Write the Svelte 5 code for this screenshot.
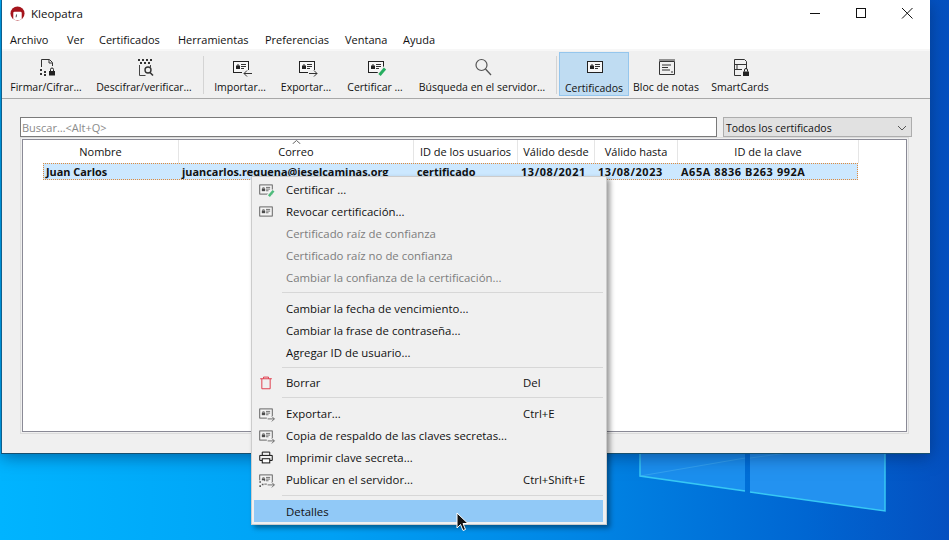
<script lang="ts">
  const menus = ["Archivo", "Ver", "Certificados", "Herramientas", "Preferencias", "Ventana", "Ayuda"];

  const tools = [
    { icon: "sign", label: "Firmar/Cifrar…" },
    { icon: "decrypt", label: "Descifrar/verificar…" },
    { sep: true },
    { icon: "import", label: "Importar…" },
    { icon: "export", label: "Exportar…" },
    { icon: "certify", label: "Certificar …" },
    { icon: "search", label: "Búsqueda en el servidor…" },
    { sep: true },
    { icon: "card", label: "Certificados", active: true },
    { icon: "notes", label: "Bloc de notas" },
    { icon: "smart", label: "SmartCards" },
  ];

  const columns = ["Nombre", "Correo", "ID de los usuarios", "Válido desde", "Válido hasta", "ID de la clave"];

  const row = ["Juan Carlos", "juancarlos.requena@ieselcaminas.org", "certificado", "13/08/2021", "13/08/2023", "A65A 8836 B263 992A"];

  const items = [
    { icon: "certify", label: "Certificar ..." },
    { icon: "card", label: "Revocar certificación..." },
    { label: "Certificado raíz de confianza", off: true },
    { label: "Certificado raíz no de confianza", off: true },
    { label: "Cambiar la confianza de la certificación...", off: true },
    { sep: 9 },
    { label: "Cambiar la fecha de vencimiento..." },
    { label: "Cambiar la frase de contraseña..." },
    { label: "Agregar ID de usuario..." },
    { sep: 8 },
    { icon: "trash", label: "Borrar", key: "Del" },
    { sep: 9 },
    { icon: "export", label: "Exportar...", key: "Ctrl+E" },
    { icon: "export", label: "Copia de respaldo de las claves secretas..." },
    { icon: "print", label: "Imprimir clave secreta..." },
    { icon: "publish", label: "Publicar en el servidor...", key: "Ctrl+Shift+E" },
    { sep: 10 },
    { label: "Detalles", hot: true },
  ];
</script>

{#snippet cardBase()}
  <rect x="4.5" y="4.5" width="15" height="11" fill="#f6f6f6" stroke="#222" />
  <rect x="7" y="9" width="4" height="3" fill="#222" />
  <path d="M8 9V8h2v1" fill="none" stroke="#222" />
  <path d="M12 7.500h5M12 9.500h5M12 11.500h3" stroke="#333" fill="none" />
{/snippet}

{#snippet glyph(name)}
  <svg class="glyph" viewBox="0 0 24 20" aria-hidden="true">
    {#if name === "card"}
      {@render cardBase()}
    {:else if name === "import"}
      {@render cardBase()}
      <rect x="13" y="13" width="10" height="7" fill="#f0f0f0" />
      <path d="M23 16.500h-8M18 13.500l-3 3 3 3" fill="none" stroke="#333" />
    {:else if name === "export"}
      {@render cardBase()}
      <rect x="13" y="13" width="10" height="7" fill="#f0f0f0" />
      <path d="M14 16.500h8M19 13.500l3 3-3 3" fill="none" stroke="#333" />
    {:else if name === "certify"}
      {@render cardBase()}
      <path d="M15 18l6-7" stroke="#f0f0f0" stroke-width="5" fill="none" />
      <path d="M15.500 18l5.500-6.500" stroke="#27ae60" stroke-width="3" fill="none" />
    {:else if name === "publish"}
      {@render cardBase()}
      <rect x="3" y="11" width="7" height="9" fill="#f0f0f0" />
      <path d="M4 12h2v2H4zM7 15h2v2H7zM4 17h2v2H4z" fill="#333" />
      <rect x="13" y="13" width="10" height="7" fill="#f0f0f0" />
      <path d="M14 16.500h8M19 13.500l3 3-3 3" fill="none" stroke="#333" />
    {:else if name === "sign"}
      <path d="M6.500 10V2.500h8l3 3V9" fill="none" stroke="#333" />
      <path d="M14 3v3h3" fill="none" stroke="#333" />
      <path d="M5 12h2v2H5zM9 14h2v2H9zM5 16h2v2H5zM9 17h2v2H9z" fill="#333" />
      <rect x="14" y="14" width="6" height="4.500" fill="#222" />
      <path d="M15.500 14v-1.500a1.500 1.500 0 0 1 3 0V14" fill="none" stroke="#222" />
    {:else if name === "decrypt"}
      <path d="M5 2h2v2H5zM9 2h2v2H9zM13 2h2v2h-2zM17 2h2v2h-2zM7 5h2v2H7zM11 5h2v2h-2zM15 5h2v2h-2z" fill="#333" />
      <path d="M6.500 8v10.500h6M17.500 8v2" fill="none" stroke="#444" />
      <circle cx="15" cy="13" r="3" fill="none" stroke="#333" stroke-width="1.400" />
      <path d="M17 15.500l3 3" stroke="#333" stroke-width="1.600" />
    {:else if name === "search"}
      <circle cx="10.500" cy="8" r="5.500" fill="none" stroke="#555" stroke-width="1.200" />
      <path d="M14.500 12l5.500 6" stroke="#555" stroke-width="1.300" />
    {:else if name === "notes"}
      <path d="M4.500 4.500h15v13h-15z" fill="none" stroke="#333" />
      <path d="M5 2v2M7 2v2M9 2v2M11 2v2M13 2v2M15 2v2M17 2v2M19 2v2" stroke="#333" />
      <path d="M7 8h9M7 10.500h6M7 13h8M16 15h2" stroke="#333" fill="none" />
    {:else if name === "smart"}
      <path d="M5.500 18.500V2.500h10l2 2V12M5.500 18.500H12" fill="none" stroke="#333" />
      <path d="M6 7.500h11M6 12.500h7M8 7.500v5" fill="none" stroke="#333" />
      <rect x="14" y="14.500" width="6" height="4.500" fill="#222" />
      <path d="M15.500 14.500V13a1.500 1.500 0 0 1 3 0v1.500" fill="none" stroke="#222" />
    {:else if name === "trash"}
      <path d="M5 5.500h14M9 5.500v-2h6v2M7 5.500v12h10v-12" fill="none" stroke="#e04050" stroke-width="1.200" />
    {:else if name === "print"}
      <path d="M7.500 7V3.500h9V7M7.500 13.500h-3v-6h15v6h-3" fill="none" stroke="#111" stroke-width="1.200" />
      <rect x="7.500" y="11.500" width="9" height="5" fill="#fff" stroke="#111" stroke-width="1.200" />
    {/if}
  </svg>
{/snippet}

<div class="desktop">
  <svg class="wallpaper" viewBox="0 0 949 540" aria-hidden="true">
    <defs>
      <linearGradient id="sky" x1="0" y1="0" x2="1" y2="0">
        <stop offset="0" stop-color="#00b4ff" />
        <stop offset="0.35" stop-color="#00a0f4" />
        <stop offset="0.62" stop-color="#0084e4" />
        <stop offset="0.85" stop-color="#0066d2" />
        <stop offset="1" stop-color="#0450c0" />
      </linearGradient>
    </defs>
    <rect width="949" height="540" fill="url(#sky)" />
    <path d="M640 440H745V491L640 476Z" fill="#1b8fee" />
    <path d="M750 440H885V511L750 492Z" fill="#2392f0" />
    <path d="M640 440V476L745 491M750 492L885 511V440" stroke="#37c8f4" stroke-width="1.500" fill="none" />
    <path d="M640 476L745 458M750 458L885 440" stroke="#4ab4f4" fill="none" opacity="0.5" />
  </svg>

  <section class="window">
    <header class="titlebar">
      <svg class="logo" viewBox="0 0 16 16" aria-hidden="true">
        <circle cx="8" cy="8" r="7.500" fill="#a5141c" />
        <path d="M3.500 14V7.500q0-1.500 1.500-1.500h6q1.500 0 1.500 1.500V14q-4.500 2-9 0Z" fill="#fff" />
        <path d="M7 9l-.5 3" stroke="#444" />
      </svg>
      <span class="app-name">Kleopatra</span>
      <div class="controls">
        <svg viewBox="0 0 46 27" aria-hidden="true"><path d="M18 13.500h10" stroke="#111" /></svg>
        <svg viewBox="0 0 46 27" aria-hidden="true"><rect x="18.500" y="8.500" width="9" height="9" fill="none" stroke="#111" /></svg>
        <svg viewBox="0 0 46 27" aria-hidden="true"><path d="M18 8l10.500 10.500M28.500 8L18 18.500" stroke="#111" /></svg>
      </div>
    </header>

    <nav class="menubar">
      {#each menus as m}
        <span>{m}</span>
      {/each}
    </nav>

    <div class="toolbar">
      {#each tools as t}
        {#if t.sep}
          <div class="tool-sep"></div>
        {:else}
          <div class="tool" class:active={t.active}>
            {@render glyph(t.icon)}
            <span>{t.label}</span>
          </div>
        {/if}
      {/each}
    </div>

    <div class="filters">
      <div class="search">Buscar…&lt;Alt+Q&gt;</div>
      <div class="combo">
        <span>Todos los certificados</span>
        <svg viewBox="0 0 10 6" aria-hidden="true"><path d="M1 1l4 4 4-4" fill="none" stroke="#555" /></svg>
      </div>
    </div>

    <div class="frame">
      <div class="table">
        <div class="columns">
          {#each columns as c, i}
            <div class="col">
              {#if i === 1}
                <svg class="sort" viewBox="0 0 9 4" aria-hidden="true"><path d="M.5 4l4-3.500 4 3.500" fill="none" stroke="#666" /></svg>
              {/if}
              {c}
            </div>
          {/each}
        </div>
        <div class="row">
          {#each row as cell}
            <div class="cell">{cell}</div>
          {/each}
        </div>
      </div>
    </div>
  </section>

  <div class="context">
    {#each items as it}
      {#if it.sep}
        <div class="sep" style="height: {it.sep}px"></div>
      {:else}
        <div class="item" class:off={it.off} class:hot={it.hot}>
          <span class="slot" class:dim={it.icon !== "trash" && it.icon !== "print"}>
            {#if it.icon}{@render glyph(it.icon)}{/if}
          </span>
          <span class="label">{it.label}</span>
          {#if it.key}<span class="key">{it.key}</span>{/if}
        </div>
      {/if}
    {/each}
  </div>

  <svg class="cursor" viewBox="0 0 13 20" aria-hidden="true">
    <path d="M1 1v15l3.500-3.500 2.500 6 2.500-1-2.500-6h5Z" fill="#111" stroke="#fff" />
  </svg>
</div>

<style>
  :global(body) {
    margin: 0;
    background: #0078d4;
  }

  .desktop {
    position: relative;
    width: 949px;
    height: 540px;
    overflow: hidden;
    font-family: "Open Sans", "Noto Sans", sans-serif;
    font-size: 11px;
    color: #111;
  }

  .wallpaper {
    position: absolute;
    inset: 0;
    width: 949px;
    height: 540px;
  }

  .window {
    position: absolute;
    left: 1px;
    top: 0;
    width: 929px;
    height: 454px;
    box-sizing: border-box;
    border-left: 1px solid #0f5f8c;
    border-bottom: 1px solid #17506f;
    background: #f0f0f0;
    box-shadow: 0 3px 16px rgba(0, 30, 80, 0.5);
    display: flex;
    flex-direction: column;
  }

  .titlebar {
    height: 27px;
    background: #fff;
    display: flex;
    align-items: center;
    padding-left: 8px;
  }

  .logo {
    width: 15px;
    height: 15px;
  }

  .app-name {
    margin-left: 6px;
    font-size: 11.500px;
  }

  .controls {
    margin-left: auto;
    display: flex;
  }

  .controls svg {
    width: 46px;
    height: 27px;
  }

  .menubar {
    height: 20px;
    padding-top: 2px;
    background: #fff;
    border-bottom: 2px solid #f7f7f7;
    display: grid;
    grid-template-columns: 57px 32px 79px 87px 80px 58px 60px;
    align-items: center;
    padding-left: 8px;
    font-size: 11px;
  }

  .toolbar {
    height: 48px;
    box-sizing: border-box;
    border-bottom: 1px solid #a8a8a8;
    display: grid;
    grid-template-columns: 86px 110px 9px 64px 68px 70px 144px 5px 70px 74px 74px;
    padding-left: 1px;
  }

  .tool {
    display: flex;
    flex-direction: column;
    align-items: center;
    margin-top: 1px;
    padding-top: 5px;
    white-space: nowrap;
    font-size: 10.500px;
    box-sizing: border-box;
    height: 44px;
  }

  .tool > span {
    margin-top: 2px;
    line-height: 16px;
  }

  .tool .glyph {
    width: 24px;
    height: 20px;
    flex: none;
    margin-left: 2px;
  }

  .tool.active {
    background: #bfdcf2;
    border: 1px solid #95c6ed;
    padding-top: 4px;
  }

  .tool.active > span {
    margin-top: 3px;
  }

  .tool-sep {
    width: 1px;
    justify-self: center;
    background: #d4d4d4;
    height: 38px;
    margin-top: 5px;
  }

  .filters {
    display: flex;
    margin: 18px 0 0 18px;
    height: 20px;
    font-size: 10.500px;
  }

  .search {
    width: 697px;
    box-sizing: border-box;
    border: 1px solid #7a7a7a;
    background: #fff;
    color: #8a8a8a;
    line-height: 20px;
    padding-left: 1px;
    font-size: 11px;
  }

  .combo {
    width: 189px;
    margin-left: 6px;
    box-sizing: border-box;
    border: 1px solid #adadad;
    background: #e1e1e1;
    display: flex;
    align-items: center;
    justify-content: space-between;
    padding: 1px 4px 0 2px;
  }

  .combo svg {
    width: 10px;
    height: 6px;
  }

  .frame {
    margin: 0 0 0 18px;
    width: 889px;
    height: 297px;
    box-sizing: border-box;
    border: 1px solid #dcdcdc;
    padding: 1px;
  }

  .table {
    height: 100%;
    box-sizing: border-box;
    border: 1px solid #8a8a96;
    background: #fff;
  }

  .columns {
    display: grid;
    grid-template-columns: 156px 235px 104px 77px 83px 181px;
    height: 23px;
    font-size: 11px;
  }

  .col {
    position: relative;
    text-align: center;
    line-height: 23px;
    border-right: 1px solid #e5e5e5;
  }

  .sort {
    position: absolute;
    left: 113px;
    top: 0;
    width: 9px;
    height: 4px;
  }

  .row {
    display: grid;
    height: 17px;
    margin-left: 20px;
    width: 815px;
    grid-template-columns: 136px 235px 104px 77px 83px 180px;
    background: #cce8ff;
    outline: 1px dotted #e08a3c;
    outline-offset: -1px;
    font-weight: 700;
    font-size: 10.900px;
    line-height: 17px;
  }

  .cell {
    padding-left: 3px;
    white-space: nowrap;
    overflow: hidden;
  }

  .cell:nth-child(n + 4) {
    letter-spacing: 0.6px;
  }

  .context {
    position: absolute;
    left: 251px;
    top: 176px;
    width: 356px;
    height: 349px;
    box-sizing: border-box;
    padding: 1px 3px 2px 2px;
    background: #f0f0f0;
    border: 1px solid #ccc;
    box-shadow: 3px 3px 5px rgba(0, 0, 0, 0.4);
    font-size: 11.400px;
  }

  .item {
    height: 22px;
    display: flex;
    align-items: center;
    position: relative;
    white-space: nowrap;
  }

  .item.off {
    color: #7d7d7d;
  }

  .item.hot {
    background: #91c9f7;
  }

  .slot {
    width: 24px;
    display: flex;
    justify-content: center;
    margin-right: 8px;
  }

  .slot.dim {
    opacity: 0.8;
  }

  .slot .glyph {
    width: 20px;
    height: 17px;
  }

  .key {
    position: absolute;
    left: 269px;
  }

  .sep {
    display: flex;
    align-items: center;
    margin-left: 28px;
  }

  .sep::after {
    content: "";
    flex: 1;
    height: 1px;
    background: #d7d7d7;
  }

  .cursor {
    position: absolute;
    left: 456px;
    top: 512px;
    width: 13px;
    height: 20px;
  }
</style>
